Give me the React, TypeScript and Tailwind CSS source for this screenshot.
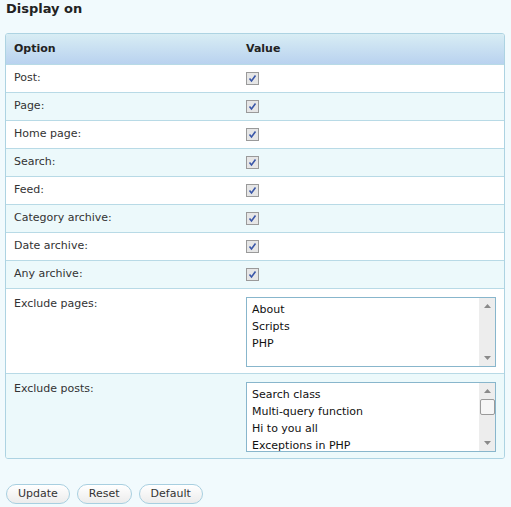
import type { ReactNode } from "react";

const CHECK_ROWS = [
  "Post:",
  "Page:",
  "Home page:",
  "Search:",
  "Feed:",
  "Category archive:",
  "Date archive:",
  "Any archive:",
];

const PAGES = ["About", "Scripts", "PHP"];
const POSTS = ["Search class", "Multi-query function", "Hi to you all", "Exceptions in PHP"];

function CheckedBox() {
  return (
    <span className="flex h-[13px] w-[13px] items-center justify-center border border-[#9a9a9a] bg-[#e6e6e6]">
      <svg width="9" height="9" viewBox="0 0 9 9">
        <path d="M1.5 4.5 L3.5 7 L7.5 1.5" fill="none" stroke="#3a57a8" strokeWidth="1.6" />
      </svg>
    </span>
  );
}

function ListBox({ items, thumb }: { items: string[]; thumb?: boolean }) {
  return (
    <div className="flex h-[70px] w-[250px] border border-[#88b6cc] bg-white">
      <div className="flex-1 overflow-hidden px-[5px] pt-[3px] leading-[17px] text-[#111]">
        {items.map((item) => (
          <div key={item}>{item}</div>
        ))}
      </div>
      <div className="flex w-[16px] flex-col bg-[#ededed]">
        <div className="flex h-[16px] items-center justify-center">
          <svg width="7" height="4" viewBox="0 0 7 4">
            <path d="M0 4 L3.5 0 L7 4 Z" fill="#8a8a8a" />
          </svg>
        </div>
        <div className="flex-1">
          {thumb && <div className="mx-auto h-[16px] w-[15px] rounded-[2px] border border-[#9a9a9a] bg-[#f6f6f6]" />}
        </div>
        <div className="flex h-[16px] items-center justify-center">
          <svg width="7" height="4" viewBox="0 0 7 4">
            <path d="M0 0 L7 0 L3.5 4 Z" fill="#8a8a8a" />
          </svg>
        </div>
      </div>
    </div>
  );
}

function Row({ label, striped, tall, children }: { label: string; striped: boolean; tall?: boolean; children: ReactNode }) {
  return (
    <div
      className={`grid grid-cols-[240px_1fr] border-t border-[#b8dae6] ${striped ? "bg-[#ecf9fb]" : "bg-white"} ${
        tall ? "pb-[6px]" : "h-[28px]"
      }`}
    >
      <div className={`pl-[8px] ${tall ? "pt-[7px]" : "flex items-center"}`}>{label}</div>
      <div className={tall ? "pt-[8px]" : "flex items-center"}>{children}</div>
    </div>
  );
}

export default function App() {
  return (
    <div className="min-h-screen w-[511px] bg-[#f1fafd] px-[5px] font-['DejaVu_Sans',Verdana,sans-serif] text-[11px] text-[#333]">
      <h3 className="pl-[1px] text-[13px] leading-[17px] font-bold text-[#222]">Display on</h3>

      <div className="mt-[16px] w-[500px] overflow-hidden rounded-[3px] border border-[#add3e2]">
        <div className="grid h-[30px] grid-cols-[240px_1fr] items-center bg-gradient-to-b from-[#d8edf4] to-[#b9d2ef] font-bold text-[#222]">
          <div className="pl-[8px]">Option</div>
          <div>Value</div>
        </div>

        {CHECK_ROWS.map((label, index) => (
          <Row key={label} label={label} striped={index % 2 === 1}>
            <CheckedBox />
          </Row>
        ))}

        <Row label="Exclude pages:" striped={false} tall>
          <ListBox items={PAGES} />
        </Row>
        <Row label="Exclude posts:" striped tall>
          <ListBox items={POSTS} thumb />
        </Row>
      </div>

      <div className="mt-[25px] flex gap-[7px] pl-[1px]">
        {["Update", "Reset", "Default"].map((name) => (
          <button
            key={name}
            className="h-[20px] rounded-full border border-[#a8cfe0] bg-gradient-to-b from-white to-[#ececec] px-[11px] text-[11px] text-[#333]"
          >
            {name}
          </button>
        ))}
      </div>
    </div>
  );
}
